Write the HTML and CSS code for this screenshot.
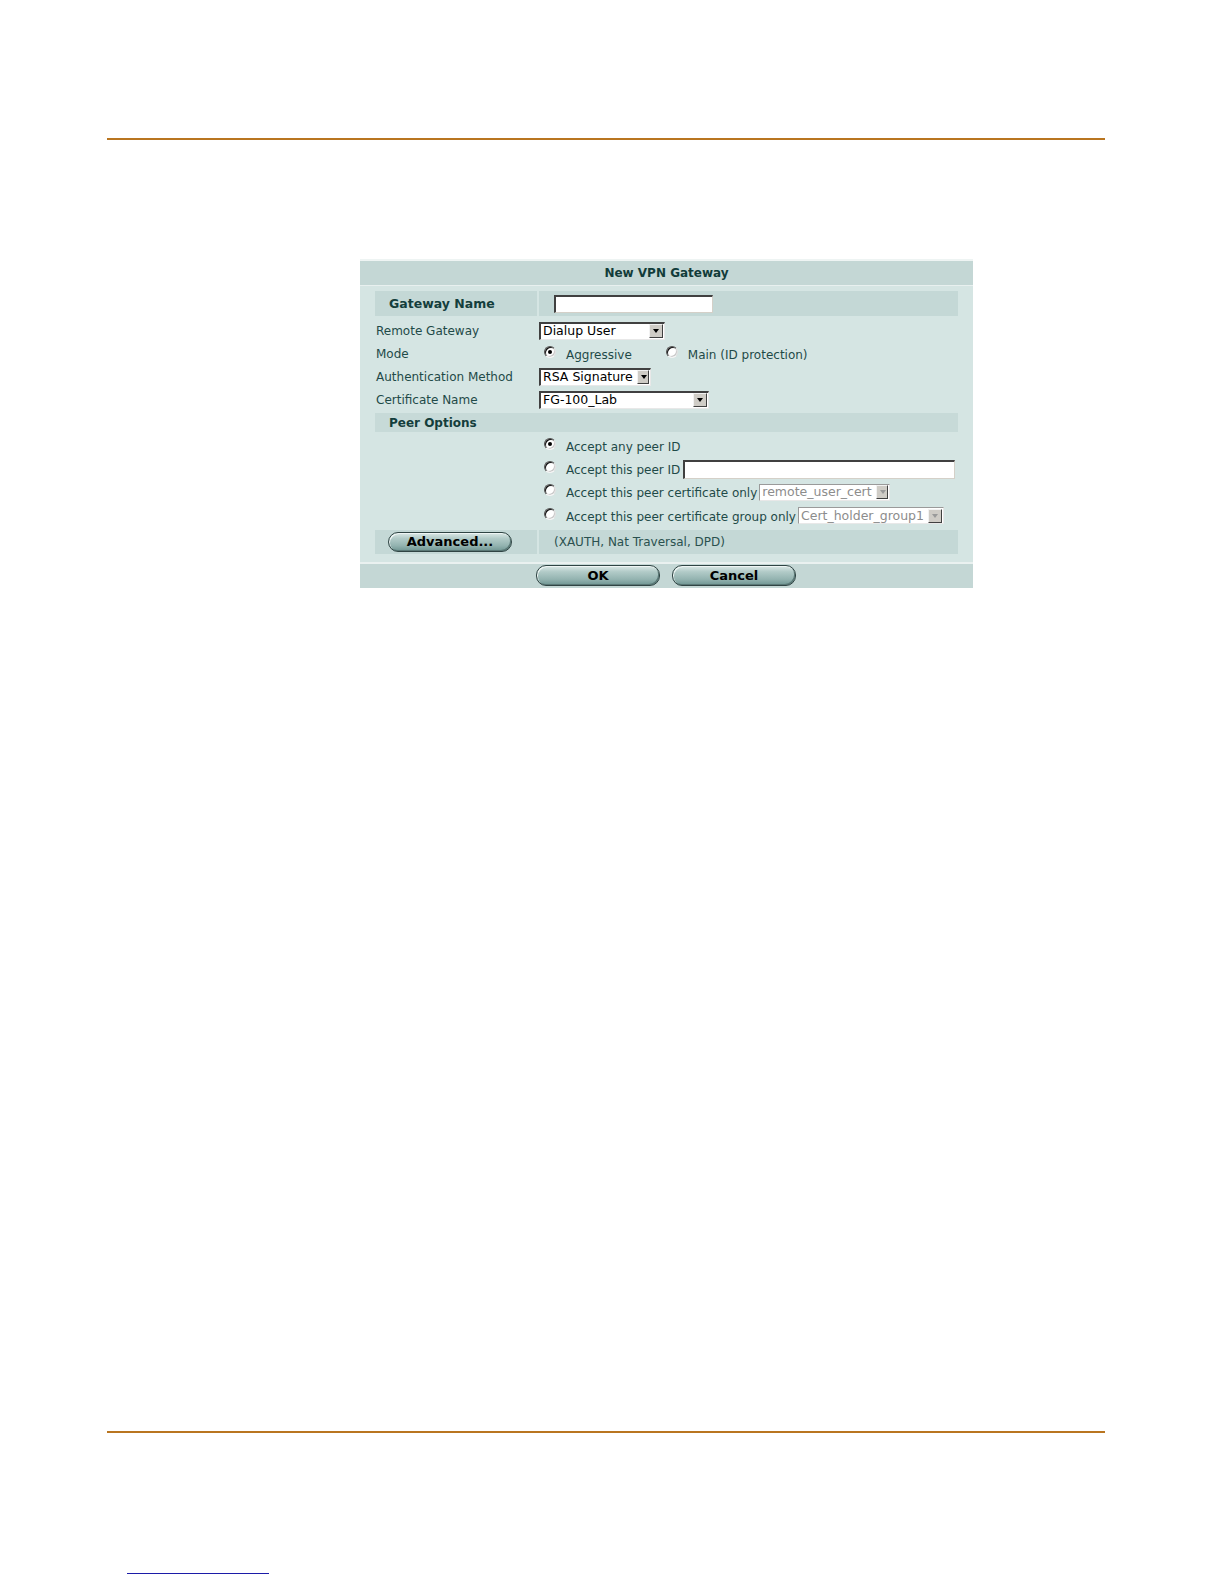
FILE: index.html
```html
<!DOCTYPE html>
<html>
<head>
<meta charset="utf-8">
<title>New VPN Gateway</title>
<link rel="stylesheet" href="styles.css">
</head>
<body>
<div class="page">
  <div class="rule rule-top"></div>

  <div class="dialog">
    <div class="dlg-title">New VPN Gateway</div>
    <div class="dlg-body">
      <div class="row row-hl row-name">
        <div class="lab lab-bold">Gateway Name</div>
        <div class="val val-pad"><span class="textbox tb-name"></span></div>
      </div>

      <div class="row row-std">
        <div class="lab">Remote Gateway</div>
        <div class="val"><span class="select sel-remote"><span class="sel-text">Dialup User</span><span class="arrow"></span></span></div>
      </div>

      <div class="row row-std">
        <div class="lab">Mode</div>
        <div class="val">
          <span class="opt"><span class="radio on"></span><span class="opt-text">Aggressive</span></span>
          <span class="opt opt-main"><span class="radio"></span><span class="opt-text">Main (ID protection)</span></span>
        </div>
      </div>

      <div class="row row-std">
        <div class="lab">Authentication Method</div>
        <div class="val"><span class="select sel-auth"><span class="sel-text">RSA Signature</span><span class="arrow"></span></span></div>
      </div>

      <div class="row row-std">
        <div class="lab">Certificate Name</div>
        <div class="val"><span class="select sel-cert"><span class="sel-text">FG-100_Lab</span><span class="arrow"></span></span></div>
      </div>

      <div class="row row-section">
        <div class="section-text">Peer Options</div>
      </div>

      <div class="peer-list">
        <div class="peer-row"><span class="radio on"></span><span class="opt-text">Accept any peer ID</span></div>
        <div class="peer-row"><span class="radio"></span><span class="opt-text">Accept this peer ID</span><span class="textbox tb-peer"></span></div>
        <div class="peer-row"><span class="radio"></span><span class="opt-text">Accept this peer certificate only</span><span class="select disabled sel-pcert"><span class="sel-text">remote_user_cert</span><span class="arrow"></span></span></div>
        <div class="peer-row"><span class="radio"></span><span class="opt-text">Accept this peer certificate group only</span><span class="select disabled sel-group"><span class="sel-text">Cert_holder_group1</span><span class="arrow"></span></span></div>
      </div>

      <div class="row row-hl row-adv">
        <div class="lab lab-btn"><span class="pill pill-adv">Advanced...</span></div>
        <div class="val val-pad note">(XAUTH, Nat Traversal, DPD)</div>
      </div>
    </div>
    <div class="dlg-foot">
      <span class="pill pill-ok">OK</span>
      <span class="pill pill-cancel">Cancel</span>
    </div>
  </div>

  <div class="rule rule-bottom"></div>
  <div class="footer-link"></div>
</div>
</body>
</html>
```

FILE: styles.css
```css
html, body {
  margin: 0;
  padding: 0;
  background: #ffffff;
}

.page {
  width: 1224px;
  padding-top: 138px;
  font-family: "DejaVu Sans", Verdana, sans-serif;
  font-size: 12px;
  color: #1f4a48;
}

.rule {
  height: 2px;
  background: #b97520;
  margin-left: 107px;
  width: 998px;
}

.dialog {
  margin-top: 119px;
  margin-left: 360px;
  width: 613px;
  background: #d5e5e3;
  border-top: 2px solid #eef4f3;
  box-sizing: border-box;
}

.dlg-title {
  height: 24px;
  line-height: 24px;
  background: #c4d7d5;
  border-bottom: 1px solid #e8f0ef;
  text-align: center;
  font-weight: bold;
  font-size: 12px;
  color: #123c3a;
}

.dlg-body {
  padding: 5px 15px 8px 15px;
  display: flex;
  flex-direction: column;
}

.row {
  display: grid;
  grid-template-columns: 162px 1fr;
  column-gap: 2px;
  align-items: center;
}

.row-hl .lab,
.row-hl .val {
  background: #c4d8d6;
  align-self: stretch;
  display: flex;
  align-items: center;
}

.row-name {
  height: 25px;
  margin-bottom: 3px;
}

.row-std {
  height: 23px;
}

.lab {
  padding-left: 1px;
  white-space: nowrap;
}

.lab-bold {
  font-weight: bold;
  padding-left: 14px;
  color: #143e3c;
  font-size: 12.5px;
}

.val {
  display: flex;
  align-items: center;
  white-space: nowrap;
}

.val-pad {
  padding-left: 15px;
}

.textbox {
  display: inline-block;
  background: #ffffff;
  border-top: 2px solid #404040;
  border-left: 2px solid #404040;
  border-right: 1px solid #d4d0c8;
  border-bottom: 1px solid #d4d0c8;
  box-sizing: border-box;
}

.tb-name {
  width: 159px;
  height: 18px;
}

.tb-peer {
  width: 272px;
  height: 19px;
  margin-left: 3px;
}

.select {
  display: inline-flex;
  align-items: center;
  justify-content: space-between;
  background: #ffffff;
  border-top: 2px solid #404040;
  border-left: 2px solid #404040;
  border-right: 1px solid #e8e8e8;
  border-bottom: 1px solid #e8e8e8;
  box-sizing: border-box;
  height: 18px;
  padding-right: 1px;
  color: #000000;
  font-size: 12.5px;
}

.sel-text {
  padding-left: 2px;
  line-height: 14px;
}

.arrow {
  width: 14px;
  height: 14px;
  box-sizing: border-box;
  background: #cfccc6;
  border-top: 1px solid #f2f2f2;
  border-left: 1px solid #f2f2f2;
  border-right: 1px solid #404040;
  border-bottom: 1px solid #404040;
  position: relative;
  margin-left: 4px;
}

.arrow::after {
  content: "";
  position: absolute;
  left: 3px;
  top: 4px;
  border-left: 3.5px solid transparent;
  border-right: 3.5px solid transparent;
  border-top: 4px solid #000000;
}

.select.disabled {
  border-top: 1px solid #9a9a9a;
  border-left: 1px solid #9a9a9a;
  color: #8c8c8c;
}

.select.disabled .arrow::after {
  border-top-color: #9a9a9a;
}

.sel-remote { width: 126px; }
.sel-auth { width: 112px; }
.sel-cert { width: 170px; }
.sel-pcert { width: 131px; margin-left: 2px; height: 17px; }
.sel-group { width: 146px; margin-left: 2px; height: 17px; }

.opt {
  display: inline-flex;
  align-items: center;
  padding-left: 5px;
}

.opt-main {
  padding-left: 34px;
}

.opt-text {
  margin-left: 10px;
  color: #1f4a48;
  padding-top: 2px;
}

.radio {
  display: inline-block;
  width: 12px;
  height: 12px;
  border-radius: 50%;
  box-sizing: border-box;
  background: #ffffff;
  border: 1px solid;
  border-color: #505050 #e0e0e0 #f4f4f4 #505050;
  box-shadow: inset 1px 1px 0 #101010, inset -1px -1px 0 #c8c8c8;
  position: relative;
  top: -2px;
}

.radio.on::after {
  content: "";
  position: absolute;
  left: 3px;
  top: 3px;
  width: 4px;
  height: 4px;
  border-radius: 50%;
  background: #000000;
}

.row-section {
  display: flex;
  height: 19px;
  margin-top: 2px;
  background: #c7dad8;
  align-items: center;
}

.section-text {
  font-weight: bold;
  padding-left: 14px;
  color: #143e3c;
}

.peer-list {
  display: flex;
  flex-direction: column;
  padding-left: 169px;
  margin-top: 2px;
}

.peer-row {
  height: 23.4px;
  display: flex;
  align-items: center;
  white-space: nowrap;
}

.row-adv {
  height: 24px;
  margin-top: 2px;
}

.lab-btn {
  padding-left: 13px;
}

.note {
  color: #2a514f;
  padding-top: 1px;
}

.pill {
  display: inline-flex;
  align-items: center;
  justify-content: center;
  height: 20px;
  box-sizing: border-box;
  border: 1px solid #2f4443;
  border-radius: 10px / 10px;
  background: linear-gradient(to bottom, #dbe8e6 0%, #b2cbc8 30%, #93b3b0 70%, #6f9592 100%);
  box-shadow: inset 1px 1px 0 #eef5f4, inset -1px -1px 0 #5a7876;
  font-family: "DejaVu Sans", Tahoma, sans-serif;
  font-weight: bold;
  font-size: 13px;
  color: #000000;
}

.pill-adv {
  width: 124px;
}

.dlg-foot {
  border-top: 2px solid #eaf1f0;
  background: #c4d7d5;
  height: 24px;
  display: flex;
  align-items: center;
  padding-left: 176px;
  gap: 12px;
}

.pill-ok,
.pill-cancel {
  width: 124px;
  height: 21px;
}

.rule-bottom {
  margin-top: 843px;
}

.footer-link {
  margin-left: 127px;
  margin-top: 140px;
  width: 142px;
  height: 1px;
  background: #1c1ca8;
}
```
